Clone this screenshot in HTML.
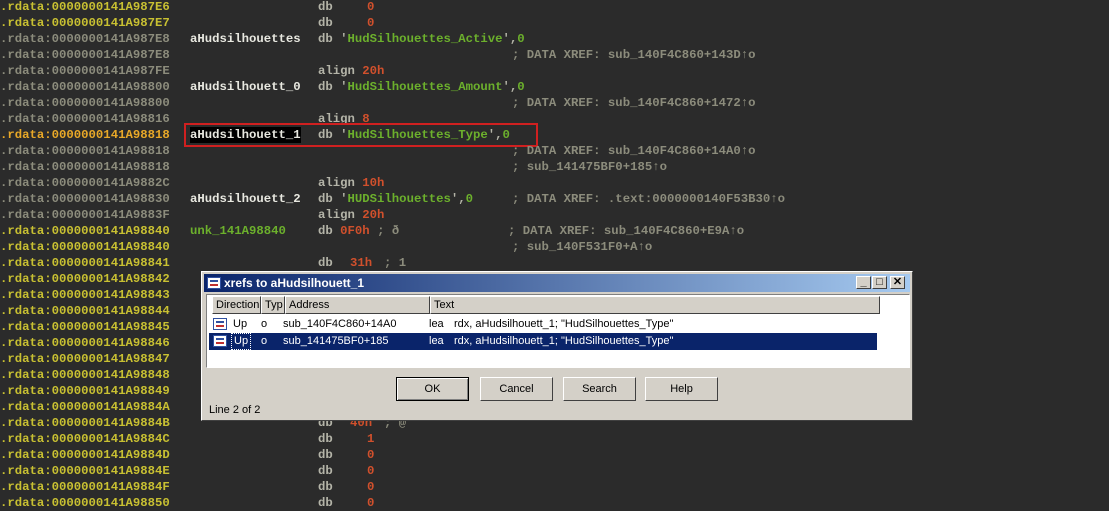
<!DOCTYPE html>
<html><head><meta charset="utf-8"><style>
body{margin:0;width:1109px;height:507px;background:#2b2b2b;overflow:hidden;position:relative;font-family:"Liberation Mono",monospace;font-weight:bold;font-size:12.3px}
.l{position:absolute;left:0;height:16px;line-height:16px;white-space:pre;width:1109px}
.l span{position:absolute;top:0}
.y{color:#c8c032}.g{color:#8c8c7c}.o{color:#e8a828}.w{color:#e8e8e0}.gr{color:#6cb02c}.r{color:#d0502c}.c{color:#8c8c7c}.k{color:#b4b4a8}
.dlg{position:absolute;left:201px;top:271px;width:712px;height:150px;background:#d4d0c8;border:1px solid #fff;border-right-color:#404040;border-bottom-color:#404040;box-sizing:border-box;font-family:"Liberation Sans",sans-serif;font-weight:normal;font-size:11px;color:#000}
.tb{position:absolute;left:2px;top:2px;right:2px;height:18px;background:linear-gradient(90deg,#0a246a,#a6caf0);color:#fff;font-weight:bold;font-size:12px;line-height:18px}
.tbb{position:absolute;top:2px;width:15px;height:13px;background:#d4d0c8;border:1px solid #fff;border-right-color:#404040;border-bottom-color:#404040;box-sizing:border-box;font-size:11px;line-height:11px;text-align:center;color:#000}
.ico{position:absolute;width:14px;height:12px;background:#fff;border:1px solid #3050a0;box-sizing:border-box}
.ico:before{content:"";position:absolute;left:2px;top:2px;width:8px;height:2px;background:#3050a0}
.ico:after{content:"";position:absolute;left:2px;top:6px;width:8px;height:2px;background:#c03030}
.list{position:absolute;left:4px;top:22px;width:704px;height:74px;background:#fff;border:1px solid #808080;border-right-color:#fff;border-bottom-color:#fff;box-sizing:border-box}
.hd{position:absolute;top:1px;height:18px;background:#d4d0c8;border:1px solid #fff;border-right-color:#404040;border-bottom-color:#404040;box-sizing:border-box;line-height:16px;padding-left:3px}
.row{position:absolute;left:2px;width:668px;height:17px;line-height:17px}
.row span{position:absolute}
.btn{position:absolute;top:105px;width:73px;height:24px;border:1px solid #fff;border-right-color:#404040;border-bottom-color:#404040;box-sizing:border-box;text-align:center;line-height:22px}
</style></head><body>
<div class="l" style="top:-1px"><span class="y" style="left:0">.rdata:0000000141A987E6</span><span class="k" style="left:318px">db</span><span class="r" style="left:367px">0</span></div>
<div class="l" style="top:15px"><span class="y" style="left:0">.rdata:0000000141A987E7</span><span class="k" style="left:318px">db</span><span class="r" style="left:367px">0</span></div>
<div class="l" style="top:31px"><span class="g" style="left:0">.rdata:0000000141A987E8</span><span class="w" style="left:190px">aHudsilhouettes</span><span class="k" style="left:318px">db <span class="gr" style="position:static"><span class="k" style="position:static">'</span>HudSilhouettes_Active<span class="k" style="position:static">',</span>0</span></span></div>
<div class="l" style="top:47px"><span class="g" style="left:0">.rdata:0000000141A987E8</span><span class="c" style="left:512px">; DATA XREF: sub_140F4C860+143D↑o</span></div>
<div class="l" style="top:63px"><span class="g" style="left:0">.rdata:0000000141A987FE</span><span class="k" style="left:318px">align <span class="r" style="position:static">20h</span></span></div>
<div class="l" style="top:79px"><span class="g" style="left:0">.rdata:0000000141A98800</span><span class="w" style="left:190px">aHudsilhouett_0</span><span class="k" style="left:318px">db <span class="gr" style="position:static"><span class="k" style="position:static">'</span>HudSilhouettes_Amount<span class="k" style="position:static">',</span>0</span></span></div>
<div class="l" style="top:95px"><span class="g" style="left:0">.rdata:0000000141A98800</span><span class="c" style="left:512px">; DATA XREF: sub_140F4C860+1472↑o</span></div>
<div class="l" style="top:111px"><span class="g" style="left:0">.rdata:0000000141A98816</span><span class="k" style="left:318px">align <span class="r" style="position:static">8</span></span></div>
<div class="l" style="top:127px"><span class="o" style="left:0">.rdata:0000000141A98818</span><span class="w" style="left:190px;background:#000">aHudsilhouett_1</span><span class="k" style="left:318px">db <span class="gr" style="position:static"><span class="k" style="position:static">'</span>HudSilhouettes_Type<span class="k" style="position:static">',</span>0</span></span></div>
<div style="position:absolute;left:184px;top:123px;width:350px;height:20px;border:2px solid #d02020"></div>
<div class="l" style="top:143px"><span class="g" style="left:0">.rdata:0000000141A98818</span><span class="c" style="left:512px">; DATA XREF: sub_140F4C860+14A0↑o</span></div>
<div class="l" style="top:159px"><span class="g" style="left:0">.rdata:0000000141A98818</span><span class="c" style="left:512px">; sub_141475BF0+185↑o</span></div>
<div class="l" style="top:175px"><span class="g" style="left:0">.rdata:0000000141A9882C</span><span class="k" style="left:318px">align <span class="r" style="position:static">10h</span></span></div>
<div class="l" style="top:191px"><span class="g" style="left:0">.rdata:0000000141A98830</span><span class="w" style="left:190px">aHudsilhouett_2</span><span class="k" style="left:318px">db <span class="gr" style="position:static"><span class="k" style="position:static">'</span>HUDSilhouettes<span class="k" style="position:static">',</span>0</span></span><span class="c" style="left:512px">; DATA XREF: .text:0000000140F53B30↑o</span></div>
<div class="l" style="top:207px"><span class="g" style="left:0">.rdata:0000000141A9883F</span><span class="k" style="left:318px">align <span class="r" style="position:static">20h</span></span></div>
<div class="l" style="top:223px"><span class="y" style="left:0">.rdata:0000000141A98840</span><span class="gr" style="left:190px">unk_141A98840</span><span class="k" style="left:318px">db <span class="r" style="position:static">0F0h</span> <span class="c" style="position:static">; ð</span></span><span class="c" style="left:508px">; DATA XREF: sub_140F4C860+E9A↑o</span></div>
<div class="l" style="top:239px"><span class="y" style="left:0">.rdata:0000000141A98840</span><span class="c" style="left:512px">; sub_140F531F0+A↑o</span></div>
<div class="l" style="top:255px"><span class="y" style="left:0">.rdata:0000000141A98841</span><span class="k" style="left:318px">db</span><span class="r" style="left:350px">31h</span><span class="c" style="left:384px">; 1</span></div>
<div class="l" style="top:271px"><span class="y" style="left:0">.rdata:0000000141A98842</span></div>
<div class="l" style="top:287px"><span class="y" style="left:0">.rdata:0000000141A98843</span></div>
<div class="l" style="top:303px"><span class="y" style="left:0">.rdata:0000000141A98844</span></div>
<div class="l" style="top:319px"><span class="y" style="left:0">.rdata:0000000141A98845</span></div>
<div class="l" style="top:335px"><span class="y" style="left:0">.rdata:0000000141A98846</span></div>
<div class="l" style="top:351px"><span class="y" style="left:0">.rdata:0000000141A98847</span></div>
<div class="l" style="top:367px"><span class="y" style="left:0">.rdata:0000000141A98848</span></div>
<div class="l" style="top:383px"><span class="y" style="left:0">.rdata:0000000141A98849</span></div>
<div class="l" style="top:399px"><span class="y" style="left:0">.rdata:0000000141A9884A</span></div>
<div class="l" style="top:415px"><span class="y" style="left:0">.rdata:0000000141A9884B</span><span class="k" style="left:318px">db</span><span class="r" style="left:350px">40h</span><span class="c" style="left:384px">; @</span></div>
<div class="l" style="top:431px"><span class="y" style="left:0">.rdata:0000000141A9884C</span><span class="k" style="left:318px">db</span><span class="r" style="left:367px">1</span></div>
<div class="l" style="top:447px"><span class="y" style="left:0">.rdata:0000000141A9884D</span><span class="k" style="left:318px">db</span><span class="r" style="left:367px">0</span></div>
<div class="l" style="top:463px"><span class="y" style="left:0">.rdata:0000000141A9884E</span><span class="k" style="left:318px">db</span><span class="r" style="left:367px">0</span></div>
<div class="l" style="top:479px"><span class="y" style="left:0">.rdata:0000000141A9884F</span><span class="k" style="left:318px">db</span><span class="r" style="left:367px">0</span></div>
<div class="l" style="top:495px"><span class="y" style="left:0">.rdata:0000000141A98850</span><span class="k" style="left:318px">db</span><span class="r" style="left:367px">0</span></div>

<div class="dlg">
 <div class="tb"><div class="ico" style="left:3px;top:3px"></div><span style="position:absolute;left:20px">xrefs to aHudsilhouett_1</span>
  <div class="tbb" style="left:652px">_</div><div class="tbb" style="left:668px">□</div><div class="tbb" style="left:686px">✕</div></div>
 <div class="list">
  <div class="hd" style="left:5px;width:49px">Direction</div>
  <div class="hd" style="left:54px;width:24px">Typ</div>
  <div class="hd" style="left:78px;width:145px">Address</div>
  <div class="hd" style="left:223px;width:450px">Text</div>
  <div class="row" style="top:21px"><div class="ico" style="left:4px;top:2px"></div><span style="left:24px">Up</span><span style="left:52px">o</span><span style="left:74px">sub_140F4C860+14A0</span><span style="left:220px">lea</span><span style="left:245px">rdx, aHudsilhouett_1; "HudSilhouettes_Type"</span></div>
  <div class="row" style="top:38px;background:#0a246a;color:#fff"><div class="ico" style="left:4px;top:2px"></div><span style="left:22px;border:1px dotted #fff;height:15px;line-height:15px;padding:0 2px">Up</span><span style="left:52px">o</span><span style="left:74px">sub_141475BF0+185</span><span style="left:220px">lea</span><span style="left:245px">rdx, aHudsilhouett_1; "HudSilhouettes_Type"</span></div>
 </div>
 <div class="btn" style="left:194px;border:1px solid #000;box-shadow:inset 1px 1px #fff,inset -1px -1px #808080">OK</div>
 <div class="btn" style="left:278px">Cancel</div>
 <div class="btn" style="left:361px">Search</div>
 <div class="btn" style="left:443px">Help</div>
 <div style="position:absolute;left:7px;top:132px">Line 2 of 2</div>
</div>
</body></html>
